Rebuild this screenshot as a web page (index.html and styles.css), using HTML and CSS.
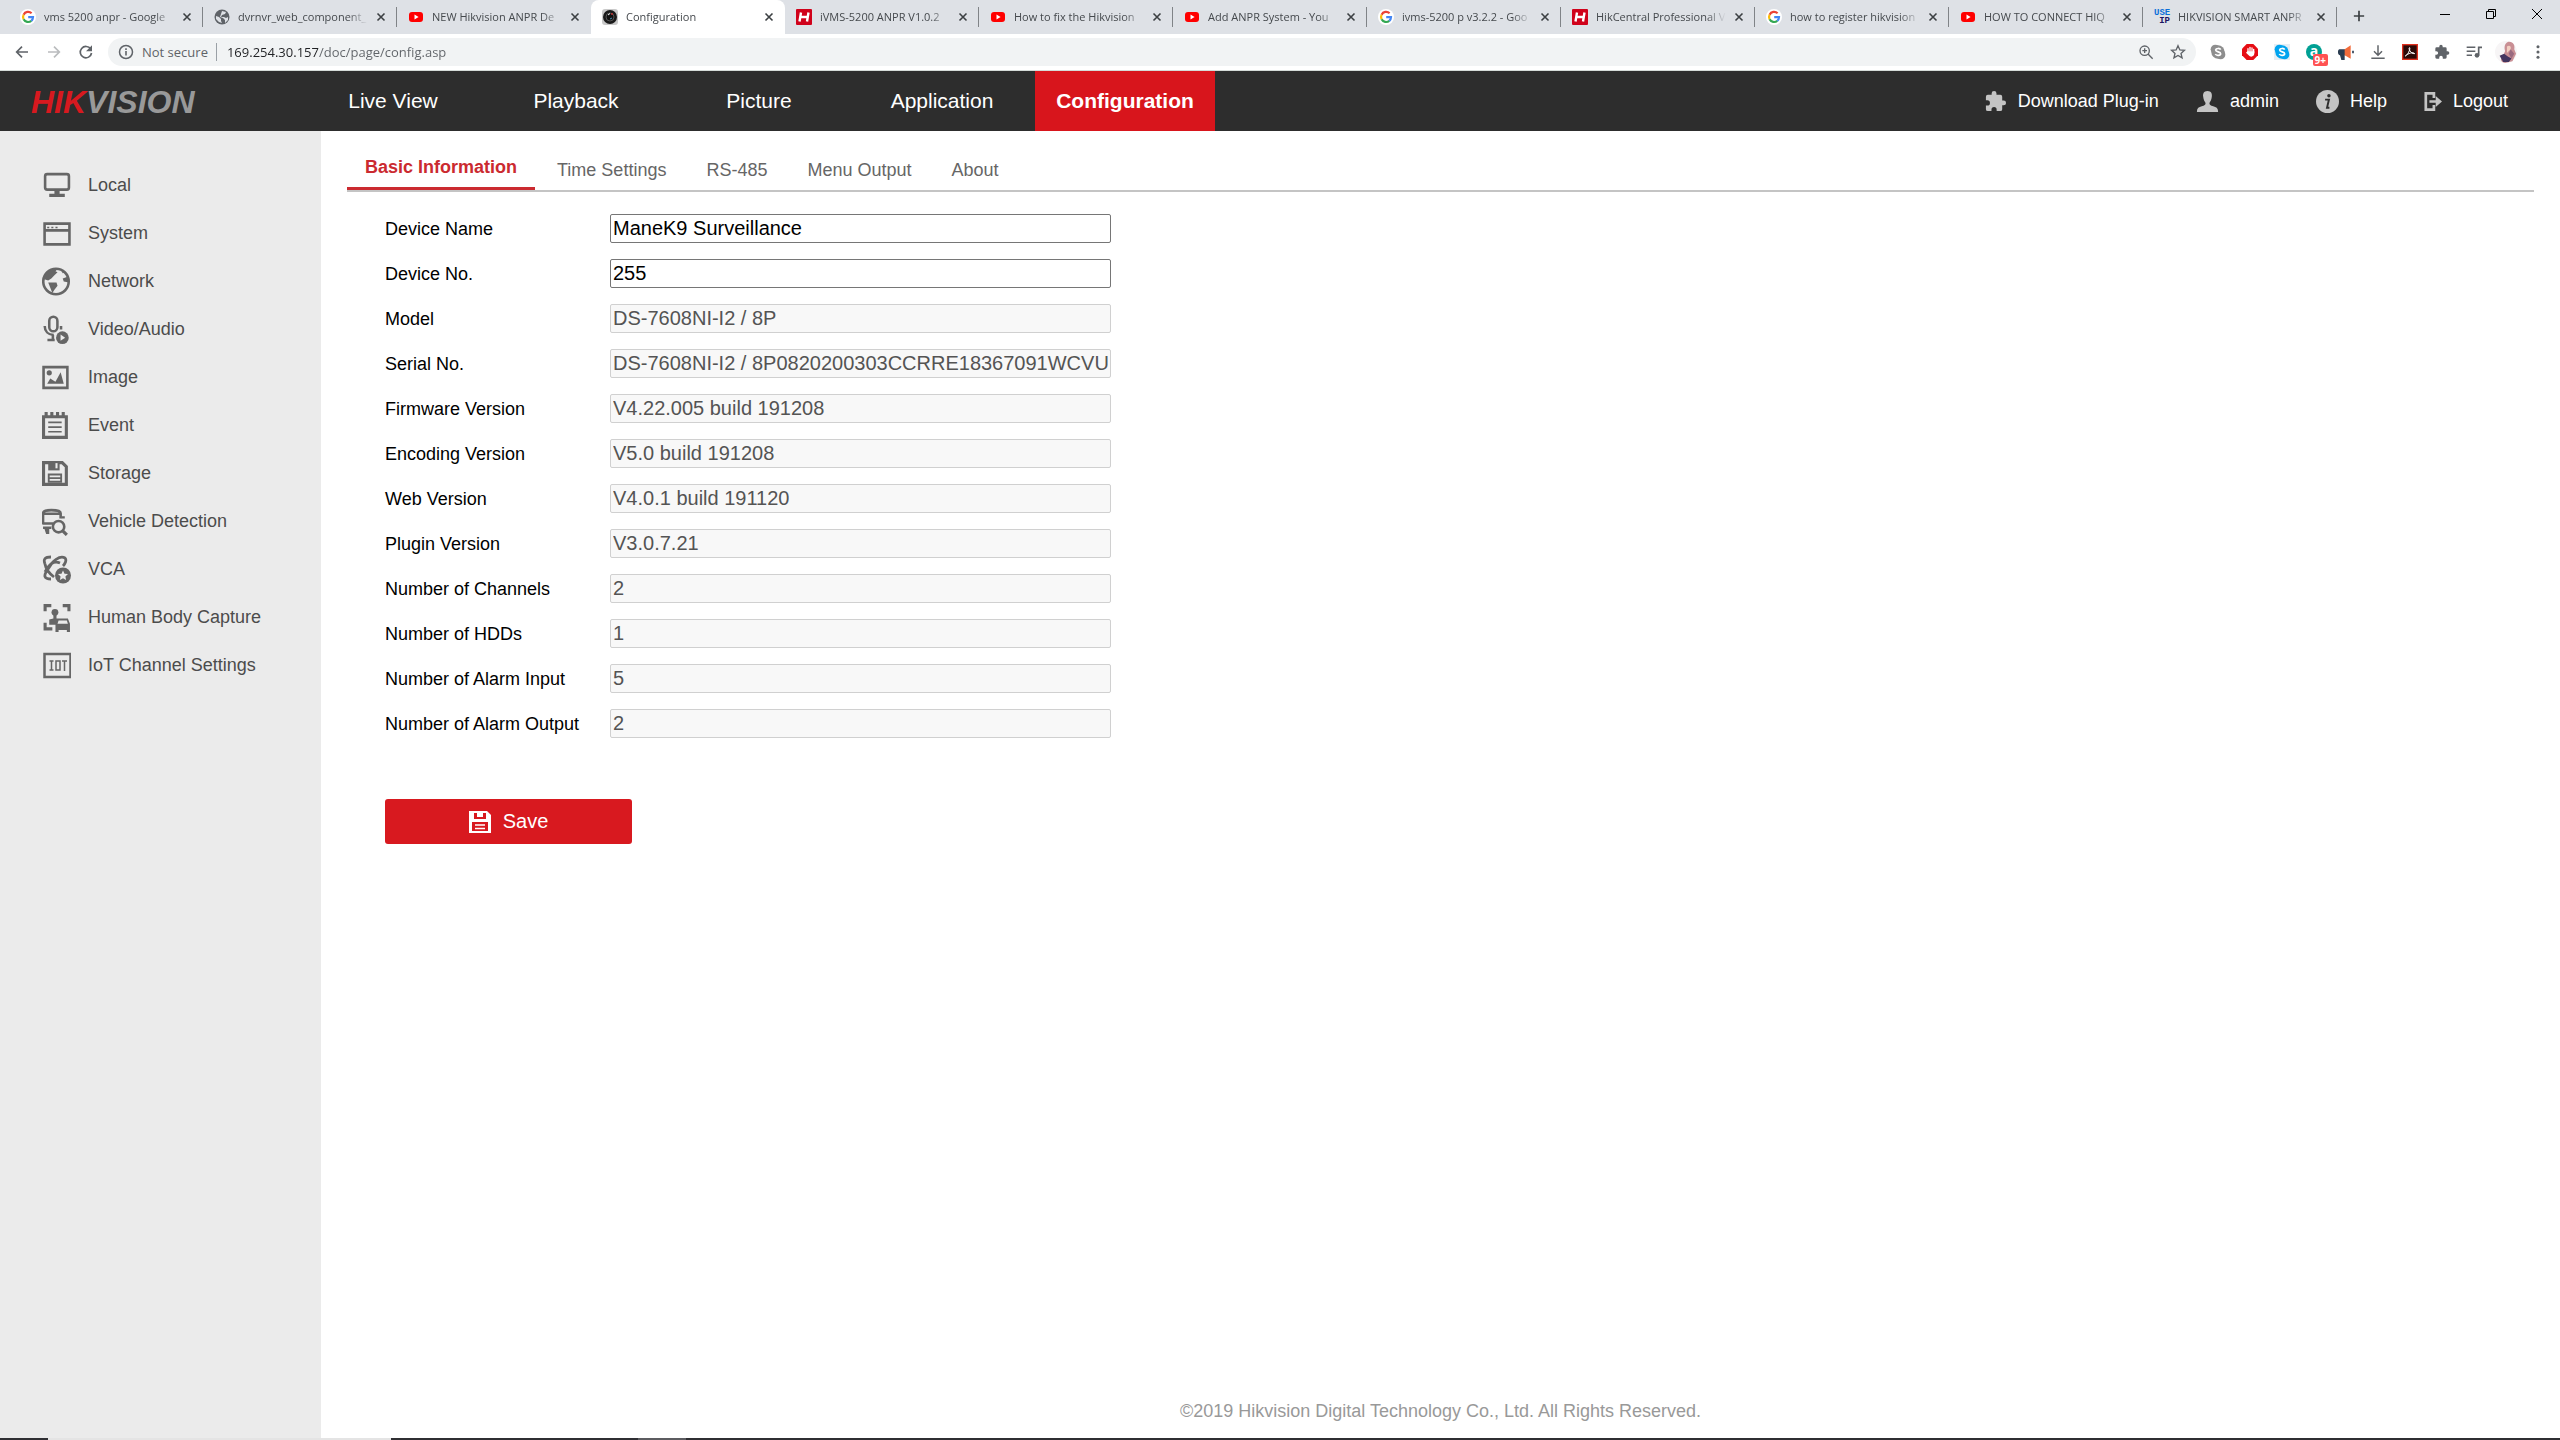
FILE: index.html
```html
<!DOCTYPE html>
<html lang="en">
<head>
    <meta charset="UTF-8">
    <meta name="viewport" content="width=device-width, initial-scale=1.0">
    <title>Configuration</title>
    <link rel="stylesheet" href="styles.css">
</head>
<body>
    <!-- shared icons -->
    <svg class="sprites" aria-hidden="true">
        <symbol id="google" viewBox="0 0 16 16">
            <circle cx="8" cy="8" r="8" fill="#fff"/>
            <g fill="none" stroke-width="2.2">
                <path d="M11.6 4.3A5 5 0 0 0 3.6 5.7" stroke="#ea4335"/>
                <path d="M3.6 5.7A5 5 0 0 0 3.6 10.3" stroke="#fbbc05"/>
                <path d="M3.6 10.3A5 5 0 0 0 11.3 11.8" stroke="#34a853"/>
                <path d="M11.3 11.8A5 5 0 0 0 13 8.2H8.2" stroke="#4285f4"/>
            </g>
        </symbol>
        <symbol id="youtube" viewBox="0 0 16 16">
            <rect x="1" y="3" width="14" height="10" rx="3" fill="#f00"/>
            <path d="M6.5 5.6v4.8L10.6 8z" fill="#fff"/>
        </symbol>
        <symbol id="hik" viewBox="0 0 16 16">
            <rect width="16" height="16" rx="1" fill="#d0021b"/>
            <path d="M5 3.5L3.5 12.5M12.5 3.5L11 12.5M4.4 8h7.4" stroke="#fff" stroke-width="2.4"/>
        </symbol>
        <symbol id="close" viewBox="0 0 10 10">
            <path d="M1.500 1.500l7 7M8.500 1.500l-7 7" stroke="#3c4043" stroke-width="1.600"/>
        </symbol>
        <symbol id="puzzle" viewBox="0 0 24 24">
            <path d="M20.500 11H19V7a2 2 0 0 0-2-2h-4V3.500a2.500 2.500 0 0 0-5 0V5H4a2 2 0 0 0-2 2v3.800h1.500a2.700 2.700 0 0 1 0 5.400H2V20a2 2 0 0 0 2 2h3.800v-1.500a2.700 2.700 0 0 1 5.400 0V22H17a2 2 0 0 0 2-2v-4h1.500a2.500 2.500 0 0 0 0-5z"/>
        </symbol>
    </svg>

    <div class="tabstrip">
        <div class="tab">
            <svg class="favicon"><use href="#google"/></svg>
            <span class="tab-title">vms 5200 anpr - Google</span>
            <button class="tab-close" aria-label="Close tab"><svg><use href="#close"/></svg></button>
        </div>
        <div class="tab">
            <svg class="favicon" viewBox="0 0 16 16"><circle cx="8" cy="8" r="7.500" fill="#5f6368"/><path d="M2 7l3 1 2 2v2l1 2-3-1-3-3zM8 2l4 1-1 2-3 1-1 2 3 0 2 1 2-1v3l-3 3 0-3-2-2-3-1 1-3z" fill="#dee1e6"/></svg>
            <span class="tab-title">dvrnvr_web_component_</span>
            <button class="tab-close" aria-label="Close tab"><svg><use href="#close"/></svg></button>
        </div>
        <div class="tab before-active">
            <svg class="favicon"><use href="#youtube"/></svg>
            <span class="tab-title">NEW Hikvision ANPR De</span>
            <button class="tab-close" aria-label="Close tab"><svg><use href="#close"/></svg></button>
        </div>
        <div class="tab active">
            <svg class="favicon" viewBox="0 0 16 16"><rect width="16" height="16" rx="3" fill="#c9c9c9"/><circle cx="8" cy="8" r="7" fill="#1a1a1a"/><circle cx="8" cy="8" r="4" fill="#111" stroke="#555"/><path d="M6 6l2-1.500" stroke="#fff"/><path d="M8 10l2-1" stroke="#4b8fb5"/><circle cx="10" cy="5" r="1" fill="#b33"/></svg>
            <span class="tab-title">Configuration</span>
            <button class="tab-close" aria-label="Close tab"><svg><use href="#close"/></svg></button>
        </div>
        <div class="tab">
            <svg class="favicon"><use href="#hik"/></svg>
            <span class="tab-title">iVMS-5200 ANPR V1.0.2</span>
            <button class="tab-close" aria-label="Close tab"><svg><use href="#close"/></svg></button>
        </div>
        <div class="tab">
            <svg class="favicon"><use href="#youtube"/></svg>
            <span class="tab-title">How to fix the Hikvision</span>
            <button class="tab-close" aria-label="Close tab"><svg><use href="#close"/></svg></button>
        </div>
        <div class="tab">
            <svg class="favicon"><use href="#youtube"/></svg>
            <span class="tab-title">Add ANPR System - You</span>
            <button class="tab-close" aria-label="Close tab"><svg><use href="#close"/></svg></button>
        </div>
        <div class="tab">
            <svg class="favicon"><use href="#google"/></svg>
            <span class="tab-title">ivms-5200 p v3.2.2 - Goo</span>
            <button class="tab-close" aria-label="Close tab"><svg><use href="#close"/></svg></button>
        </div>
        <div class="tab">
            <svg class="favicon"><use href="#hik"/></svg>
            <span class="tab-title">HikCentral Professional V</span>
            <button class="tab-close" aria-label="Close tab"><svg><use href="#close"/></svg></button>
        </div>
        <div class="tab">
            <svg class="favicon"><use href="#google"/></svg>
            <span class="tab-title">how to register hikvision</span>
            <button class="tab-close" aria-label="Close tab"><svg><use href="#close"/></svg></button>
        </div>
        <div class="tab">
            <svg class="favicon"><use href="#youtube"/></svg>
            <span class="tab-title">HOW TO CONNECT HIQ</span>
            <button class="tab-close" aria-label="Close tab"><svg><use href="#close"/></svg></button>
        </div>
        <div class="tab">
            <span class="favicon useip"><b>USE</b><i>IP</i></span>
            <span class="tab-title">HIKVISION SMART ANPR</span>
            <button class="tab-close" aria-label="Close tab"><svg><use href="#close"/></svg></button>
        </div>
        <button class="new-tab" aria-label="New tab"><svg viewBox="0 0 14 14"><path d="M7 1v12M1 7h12" stroke="#3c4043" stroke-width="2"/></svg></button>
        <div class="window-buttons">
            <button aria-label="Minimize"><svg viewBox="0 0 12 12"><path d="M1 6.500h10" stroke="#000"/></svg></button>
            <button aria-label="Restore"><svg viewBox="0 0 12 12"><path d="M1.500 3.500h7v7h-7zM3.500 3V1.500h7v7H9" fill="none" stroke="#000"/></svg></button>
            <button aria-label="Close"><svg viewBox="0 0 12 12"><path d="M1 1l10 10M11 1L1 11" stroke="#000"/></svg></button>
        </div>
    </div>

    <div class="toolbar">
        <button class="tool" aria-label="Back"><svg viewBox="0 0 24 24"><path d="M21 12H4.500M12 4l-8 8 8 8" fill="none" stroke="#5f6368" stroke-width="2.500"/></svg></button>
        <button class="tool" aria-label="Forward"><svg viewBox="0 0 24 24"><path d="M3 12h16.500M12 4l8 8-8 8" fill="none" stroke="#babcbe" stroke-width="2.500"/></svg></button>
        <button class="tool" aria-label="Reload"><svg viewBox="0 0 24 24"><path d="M19 7.500A8.500 8.500 0 1 0 20.300 13.500" fill="none" stroke="#5f6368" stroke-width="2.500"/><path d="M21 2v9h-9z" fill="#5f6368"/></svg></button>
        <div class="omnibox">
            <svg class="info" viewBox="0 0 16 16"><circle cx="8" cy="8" r="6.500" fill="none" stroke="#5f6368" stroke-width="1.500"/><path d="M8 7v4.500M8 4.200v1.700" stroke="#5f6368" stroke-width="1.600"/></svg>
            <label class="secure" for="address">Not secure</label>
            <input class="address" id="address" type="text" value="169.254.30.157/doc/page/config.asp">
            <button class="tool" aria-label="Zoom"><svg viewBox="0 0 24 24"><path d="M15 15l7 7M10 6.500v7M6.500 10h7" stroke="#5f6368" stroke-width="2"/><circle cx="10" cy="10" r="7" fill="none" stroke="#5f6368" stroke-width="2"/></svg></button>
            <button class="tool" aria-label="Bookmark this page"><svg viewBox="0 0 24 24"><path d="M12 2.500l2.800 6.400 6.900.6-5.200 4.600 1.600 6.800L12 17.300l-6.100 3.600 1.600-6.800-5.200-4.600 6.900-.6z" fill="none" stroke="#5f6368" stroke-width="2"/></svg></button>
        </div>
        <button class="tool" aria-label="Skype"><svg viewBox="0 0 24 24"><circle cx="8" cy="8" r="7" fill="#8e8e8e"/><circle cx="16" cy="16" r="7" fill="#8e8e8e"/><circle cx="12" cy="12" r="10" fill="#8e8e8e"/><path d="M16 8.500C15 6 9 6 8.500 9c0 3.500 7.500 2 7.500 5.500 0 3-6.500 3.500-8 .5" fill="none" stroke="#fff" stroke-width="2.500"/></svg></button>
        <button class="tool" aria-label="Ad blocker"><svg viewBox="0 0 24 24"><path d="M7 0h10l7 7v10l-7 7H7l-7-7V7z" fill="#e60d14"/><path d="M9 12V7M12 11V5M15 11V6M17.500 13V8" stroke="#fff" stroke-width="2" stroke-linecap="round"/><path d="M8 11h10.500v3c0 6-6.500 6-8.500 3l-4-4z" fill="#fff"/></svg></button>
        <button class="tool" aria-label="Skype calls"><svg viewBox="0 0 24 24"><rect width="24" height="24" fill="#e6eef4"/><circle cx="8" cy="8" r="7" fill="#00a4ef"/><circle cx="16" cy="16" r="7" fill="#00a4ef"/><circle cx="12" cy="12" r="10" fill="#00a4ef"/><path d="M16 8.500C15 6 9 6 8.500 9c0 3.500 7.500 2 7.500 5.500 0 3-6.500 3.500-8 .5" fill="none" stroke="#fff" stroke-width="2.500"/></svg></button>
        <button class="tool" aria-label="Amazon Assistant"><span class="round-a">a</span><span class="badge">9+</span></button>
        <button class="tool" aria-label="Announcements"><svg viewBox="0 0 24 24"><path d="M2 8h9v9h-1v7H5l-2-7c-4-1-4-8-1-9z" fill="#2b3d51"/><path d="M10 8l9-6v20l-9-5z" fill="#f26b3a"/><path d="M22.500 10v4" stroke="#2b3d51" stroke-width="2.500"/></svg></button>
        <button class="tool" aria-label="Downloads"><svg viewBox="0 0 24 24"><path d="M12 2v14M6 11l6 6 6-6M2 21.500h20" fill="none" stroke="#5f6368" stroke-width="2.200"/></svg></button>
        <button class="tool" aria-label="Adobe Acrobat"><svg viewBox="0 0 24 24"><rect x="1" y="1" width="22" height="22" fill="#2b0a08" stroke="#e0301e" stroke-width="2"/><path d="M5 18c3-1 8-10 6.500-12.500C9 5 12 15 19 14.500 17 11.500 9 14 5 18z" fill="none" stroke="#fff" stroke-width="1.500"/></svg></button>
        <button class="tool grey" aria-label="Extensions"><svg><use href="#puzzle"/></svg></button>
        <button class="tool" aria-label="Media controls"><svg viewBox="0 0 24 24"><path d="M1 5h13M1 11h13M1 17h8" stroke="#5f6368" stroke-width="2.200"/><path d="M19 17V5h5" fill="none" stroke="#5f6368" stroke-width="2.500"/><circle cx="16.500" cy="17" r="3.500" fill="#5f6368"/></svg></button>
        <button class="tool" aria-label="Profile"><svg class="avatar" viewBox="0 0 24 24"><circle cx="12" cy="12" r="12" fill="#f7f5f6"/><path d="M14 1c6-1 8 4 7 8l2 5-4 8-8 2c-5-1-6-5-2-8l2-5c-1-4-1-8 3-10z" fill="#c98f94"/><path d="M13 6c3-2 5 0 4 3l-4 4z" fill="#f2cfc2"/><path d="M5 16l5-2 4 3 4 2-3 4H9z" fill="#43355f"/><path d="M17 9l4 5-3 5-3-5z" fill="#9a6a80"/></svg></button>
        <button class="tool" aria-label="Menu"><svg viewBox="0 0 24 24" fill="#5f6368"><circle cx="12" cy="4" r="2.300"/><circle cx="12" cy="12" r="2.300"/><circle cx="12" cy="20" r="2.300"/></svg></button>
    </div>

    <header class="header">
        <div class="logo"><span>HIK</span>VISION</div>
        <nav class="menu">
            <a href="#">Live View</a>
            <a href="#">Playback</a>
            <a href="#">Picture</a>
            <a href="#">Application</a>
            <a href="#" class="current">Configuration</a>
        </nav>
        <div class="user">
            <a href="#"><svg><use href="#puzzle"/></svg>Download Plug-in</a>
            <a href="#"><svg viewBox="0 0 24 24"><path d="M12 1c4 0 5 3 4.500 6-.3 3-1.500 5-2.500 6.500 0 2 1 2.500 4 3.500 3 .8 5 2 5 5v1H1v-1c0-3 2-4.200 5-5 3-1 4-1.500 4-3.500C9 12 7.800 10 7.500 7 7 4 8 1 12 1z"/></svg>admin</a>
            <a href="#"><svg viewBox="0 0 24 24"><circle cx="12" cy="12" r="12"/><path d="M9.500 10h4l-2 8.500h2.500" fill="none" stroke="#2d2d2d" stroke-width="2"/><circle cx="13.500" cy="6" r="1.800" fill="#2d2d2d"/></svg>Help</a>
            <a href="#" class="logout"><svg viewBox="0 0 20 24"><path d="M11 8V3H2v18h9v-5" fill="none" stroke="#c4c4c4" stroke-width="3"/><path d="M6 10.500h7V6l7 6-7 6v-4.500H6z"/></svg>Logout</a>
        </div>
    </header>

    <div class="main">
        <nav class="sidebar">
            <a href="#"><svg viewBox="0 0 28 28"><rect x="3" y="3" width="23" height="15" rx="2" fill="none" stroke="#666" stroke-width="2.500"/><path d="M12 18h5v4h5v3H7v-3h5z"/></svg>Local</a>
            <a href="#"><svg viewBox="0 0 28 28"><path d="M2.500 4.500h24v20h-24zM3 11h23" fill="none" stroke="#666" stroke-width="2.500"/><path d="M5 8.200h10" stroke="#666" stroke-width="1.500" stroke-dasharray="2 2"/></svg>System</a>
            <a href="#"><svg viewBox="0 0 28 28"><circle cx="13.500" cy="14" r="12.300" fill="none" stroke="#666" stroke-width="2.500"/><path d="M2 12C3 5 9 1 15 2l-2 2 2 1-3 3-3 3-3 2-3-1zM6 15l8 0 1 3-3 4-2 3-2-5zM20 11l6-2v6l-5-1zM19 4l3 1-2 1z"/></svg>Network</a>
            <a href="#"><svg viewBox="0 0 28 32"><rect x="6" y="2" width="9" height="16" rx="4.500" fill="none" stroke="#666" stroke-width="2.800"/><path d="M1 12c0 6 4 10 10 10M10 22v5M4 27.500h8M19 12v4" fill="none" stroke="#666" stroke-width="2.800"/><circle cx="20.500" cy="25" r="7"/><path d="M18.500 21.500v7l5-3.500z" fill="#ebebeb"/></svg>Video/Audio</a>
            <a href="#"><svg viewBox="0 0 28 28"><path d="M1.500 4h23v20h-23z" fill="none" stroke="#666" stroke-width="2.500"/><circle cx="7" cy="9.500" r="2.500"/><path d="M5 20l3-5 3 2 2 1 5-9 3 11z"/></svg>Image</a>
            <a href="#"><svg viewBox="0 0 28 28"><path d="M1.500 5.500h22v20h-22z" fill="none" stroke="#666" stroke-width="3"/><path d="M4 1v5M9.500 1v5M15 1v5M20.500 1v5" stroke="#666" stroke-width="3"/><path d="M6 11h13M6 15.500h13M6 20h13" stroke="#666" stroke-width="1.600"/></svg>Event</a>
            <a href="#"><svg viewBox="0 0 28 28"><path d="M1.500 3.500h18l4 4v17h-22z" fill="none" stroke="#666" stroke-width="3"/><path d="M6 3h11v8H6z"/><path d="M13 4h2v5h-2z" fill="#ebebeb"/><path d="M6.500 15h12v7h-12zM7 18.500h11" fill="none" stroke="#666" stroke-width="1.800"/></svg>Storage</a>
            <a href="#"><svg viewBox="0 0 28 28"><path d="M1 17V6c0-2 3-3 8-3s9 1 9 3v5M1 6.500h17M1 16h10M1 20h8" fill="none" stroke="#666" stroke-width="2.500"/><path d="M2 20h5v6H4zM19 9h3v2h-3z"/><circle cx="16" cy="19" r="5.500" fill="none" stroke="#666" stroke-width="2.500"/><path d="M20 23l4 4" stroke="#666" stroke-width="3"/></svg>Vehicle Detection</a>
            <a href="#"><svg viewBox="0 0 29 29"><path d="M9 24c-7 0-8-3-3-10C10 6 18 0 23 3c2 2 0 6-2 8M3 9c-2-5 0-7 6-7M3 9c1 6 5 10 9 13M3 17c4-7 8-12 15-9" fill="none" stroke="#666" stroke-width="2.800"/><circle cx="21" cy="20.500" r="8"/><path d="M21 15.500l1.500 3.200 3.500.4-2.600 2.400.7 3.500-3.100-1.800-3.100 1.800.7-3.500-2.600-2.400 3.500-.4z" fill="#ebebeb"/></svg>VCA</a>
            <a href="#"><svg viewBox="0 0 28 28"><path d="M3 8V2.500h6M20 2.500h6V8M3 19v6h7" fill="none" stroke="#666" stroke-width="3"/><circle cx="12.500" cy="9" r="3.300"/><path d="M11 11h3v4h3l-3 6H7v-5l4-1zM15 15h10l2 5v8h-3v-2h-8v2h-3v-8z"/><path d="M16 17h8l1 3H15z" fill="#ebebeb"/></svg>Human Body Capture</a>
            <a href="#"><svg viewBox="0 0 29 29"><path d="M2.500 3h26v23h-26z" fill="none" stroke="#666" stroke-width="2.500"/><path d="M7.500 10h4M9.500 10v9M7.500 19h4M14 10h4v9h-4zM20 10h5M22.500 10v10" fill="none" stroke="#666" stroke-width="1.500"/></svg>IoT Channel Settings</a>
        </nav>

        <div class="content">
            <nav class="subtabs">
                <a href="#" class="current">Basic Information</a>
                <a href="#">Time Settings</a>
                <a href="#">RS-485</a>
                <a href="#">Menu Output</a>
                <a href="#">About</a>
            </nav>
            <form class="settings">
                <div class="row"><label for="deviceName">Device Name</label><input type="text" id="deviceName" value="ManeK9 Surveillance"></div>
                <div class="row"><label for="deviceNo">Device No.</label><input type="text" id="deviceNo" value="255"></div>
                <div class="row"><label for="model">Model</label><input type="text" id="model" value="DS-7608NI-I2 / 8P" disabled></div>
                <div class="row"><label for="serialNo">Serial No.</label><input type="text" id="serialNo" value="DS-7608NI-I2 / 8P0820200303CCRRE18367091WCVU" disabled></div>
                <div class="row"><label for="firmware">Firmware Version</label><input type="text" id="firmware" value="V4.22.005 build 191208" disabled></div>
                <div class="row"><label for="encoding">Encoding Version</label><input type="text" id="encoding" value="V5.0 build 191208" disabled></div>
                <div class="row"><label for="web">Web Version</label><input type="text" id="web" value="V4.0.1 build 191120" disabled></div>
                <div class="row"><label for="plugin">Plugin Version</label><input type="text" id="plugin" value="V3.0.7.21" disabled></div>
                <div class="row"><label for="channels">Number of Channels</label><input type="text" id="channels" value="2" disabled></div>
                <div class="row"><label for="hdds">Number of HDDs</label><input type="text" id="hdds" value="1" disabled></div>
                <div class="row"><label for="alarmIn">Number of Alarm Input</label><input type="text" id="alarmIn" value="5" disabled></div>
                <div class="row"><label for="alarmOut">Number of Alarm Output</label><input type="text" id="alarmOut" value="2" disabled></div>
                <button type="button" class="save"><svg viewBox="0 0 22 22"><path d="M0 0h18l4 4v18H0z" fill="#fff"/><path d="M5 2h3v4h6V2h3v6H5zM3 11h16v9H3z" fill="#d8191f"/><path d="M6 14h10M6 17.500h10" stroke="#fff" stroke-width="1.600"/></svg>Save</button>
            </form>
            <footer class="footer">©2019 Hikvision Digital Technology Co., Ltd. All Rights Reserved.</footer>
        </div>
    </div>
    <div class="taskbar"><span class="task-open"></span><span class="task-hover"></span></div>
</body>
</html>
```
FILE: styles.css
```css
* {
    box-sizing: border-box;
}

body {
    margin: 0;
    min-height: 100vh;
    display: flex;
    flex-direction: column;
    font-family: "Liberation Sans", Arial, sans-serif;
    font-size: 18px;
    background-color: #fff;
}

a {
    text-decoration: none;
    color: inherit;
}

button {
    font-family: inherit;
    border: none;
    background: none;
    padding: 0;
    cursor: pointer;
}

.sprites {
    display: none;
}

/* browser tabs */
.tabstrip {
    display: flex;
    height: 34px;
    padding-left: 9px;
    background-color: #dee1e6;
    font-family: "Open Sans", "Noto Sans", sans-serif;
    font-size: 11px;
    color: #45494d;
}

.tab {
    flex: 0 1 194px;
    min-width: 0;
    display: flex;
    align-items: center;
    padding: 0 11px;
    background: linear-gradient(#808387, #808387) right center / 1px 20px no-repeat;
}

.tab.before-active {
    background: none;
}

.tab.active {
    background: #fff;
    border-radius: 8px 8px 0 0;
}

.favicon {
    flex: none;
    width: 16px;
    height: 16px;
    margin-right: 8px;
}

.useip {
    display: flex;
    flex-direction: column;
    font: bold 9px/8px "Liberation Mono", monospace;
    color: #0a6fd8;
}

.useip i {
    font-style: normal;
    text-align: right;
    color: #1b1464;
}

.tab-title {
    flex: 1;
    padding-bottom: 2px;
    overflow: hidden;
    white-space: nowrap;
    -webkit-mask-image: linear-gradient(to left, transparent, #000 20px);
    mask-image: linear-gradient(to left, transparent, #000 20px);
}

.tab-close {
    width: 10px;
    height: 10px;
    margin-left: 8px;
    display: flex;
}

.tab-close svg {
    width: 10px;
    height: 10px;
}

.new-tab {
    flex: none;
    width: 44px;
}

.new-tab svg {
    width: 12px;
    height: 12px;
}

.window-buttons {
    display: flex;
    margin-left: auto;
    height: 28px;
}

.window-buttons button {
    width: 46px;
}

.window-buttons svg {
    width: 12px;
    height: 12px;
    display: block;
    margin: auto;
}

/* browser toolbar */
.toolbar {
    display: flex;
    align-items: center;
    height: 37px;
    padding: 0 6px;
    border-bottom: 1px solid #d5dbd8;
    font-family: "Open Sans", "Noto Sans", sans-serif;
    font-size: 13px;
}

.tool {
    position: relative;
    flex: none;
    width: 32px;
    height: 28px;
    display: flex;
    align-items: center;
    justify-content: center;
}

.tool svg {
    width: 16px;
    height: 16px;
}

.tool .avatar {
    width: 22px;
    height: 22px;
}

.grey {
    fill: #5f6368;
}

.omnibox {
    flex: 1;
    display: flex;
    align-items: center;
    height: 28px;
    margin: 0 6px;
    padding: 0 2px 0 10px;
    border-radius: 14px;
    background-color: #f1f3f4;
}

.info {
    width: 16px;
    height: 16px;
    margin-right: 8px;
}

.secure {
    color: #5f6368;
    padding-right: 8px;
    border-right: 1px solid #9aa0a6;
}

/* host part is darker than the path */
.address {
    flex: 1;
    min-width: 0;
    height: 24px;
    padding: 0;
    margin-left: 10px;
    border: none;
    outline: none;
    font: inherit;
    color: transparent;
    background: linear-gradient(to right, #202124 92px, #5f6368 92px);
    -webkit-background-clip: text;
    background-clip: text;
}

.round-a {
    width: 16px;
    height: 16px;
    border-radius: 50%;
    background-color: #00a093;
    color: #fff;
    font-size: 14px;
    font-weight: bold;
    line-height: 13px;
}

.badge {
    position: absolute;
    right: 2px;
    bottom: 0;
    padding: 0 2px;
    border-radius: 2px;
    background-color: #ff5252;
    color: #fff;
    font-size: 10px;
    font-weight: bold;
    line-height: 12px;
}

/* page header */
.header {
    display: flex;
    height: 60px;
    background-color: #2d2d2d;
    color: #fff;
}

.logo {
    width: 303px;
    padding-left: 31px;
    font-size: 32px;
    font-style: italic;
    font-weight: bold;
    line-height: 62px;
    color: #999;
}

.logo span {
    color: #d7191f;
}

.menu {
    display: flex;
    gap: 3px;
    font-size: 21px;
}

.menu a {
    width: 180px;
    text-align: center;
    line-height: 60px;
}

.menu .current {
    background-color: #d8151c;
    font-weight: bold;
}

.user {
    display: flex;
    align-items: center;
    gap: 37px;
    margin-left: auto;
    padding-right: 52px;
}

.user a {
    display: flex;
    align-items: center;
    gap: 11px;
}

.user svg {
    width: 23px;
    height: 23px;
    fill: #c4c4c4;
}

.user .logout svg {
    width: 18px;
}

/* left menu and content */
.main {
    flex: 1;
    display: flex;
}

.sidebar {
    width: 321px;
    padding-top: 30px;
    background-color: #ebebeb;
    color: #4c4c4c;
}

.sidebar a {
    display: flex;
    align-items: center;
    gap: 17px;
    height: 48px;
    padding-left: 42px;
}

.sidebar svg {
    width: 29px;
    height: 29px;
    fill: #666;
}

.content {
    flex: 1;
    display: flex;
    flex-direction: column;
    padding: 0 26px;
}

.subtabs {
    display: flex;
    gap: 4px;
    height: 61px;
    border-bottom: 2px solid #c4c4c4;
    color: #666;
}

.subtabs a {
    padding: 28px 18px 0;
    line-height: 22px;
}

.subtabs .current {
    padding-top: 25px;
    border-bottom: 3px solid #cb2a30;
    color: #cb2a30;
    font-weight: bold;
}

.settings {
    padding: 22px 0 0 38px;
}

.row {
    display: flex;
    align-items: center;
    height: 29px;
    margin-bottom: 16px;
}

.row label {
    width: 225px;
    padding-top: 2px;
}

.row input {
    width: 501px;
    height: 29px;
    padding: 0 2px;
    border: 1px solid #767676;
    border-radius: 2px;
    font-family: inherit;
    font-size: 20px;
    color: #000;
    background-color: #fff;
}

.row input:disabled {
    border-color: #d0d0d0;
    background-color: #f8f8f8;
    color: #545454;
}

.save {
    display: flex;
    align-items: center;
    justify-content: center;
    gap: 12px;
    width: 247px;
    height: 45px;
    margin-top: 61px;
    border-radius: 3px;
    background-color: #d8191f;
    color: #fff;
    font-size: 20px;
}

.save svg {
    width: 22px;
    height: 22px;
}

.footer {
    margin-top: auto;
    padding-bottom: 17px;
    text-align: center;
    line-height: 20px;
    color: #999;
}

/* top edge of the taskbar */
.taskbar {
    display: flex;
    height: 2px;
    padding-left: 48px;
    background-color: #2f2f33;
}

.task-open {
    width: 343px;
    margin-right: 247px;
    background-color: #e4e4e4;
}

.task-hover {
    width: 48px;
    background-color: #5c5c60;
}
```
